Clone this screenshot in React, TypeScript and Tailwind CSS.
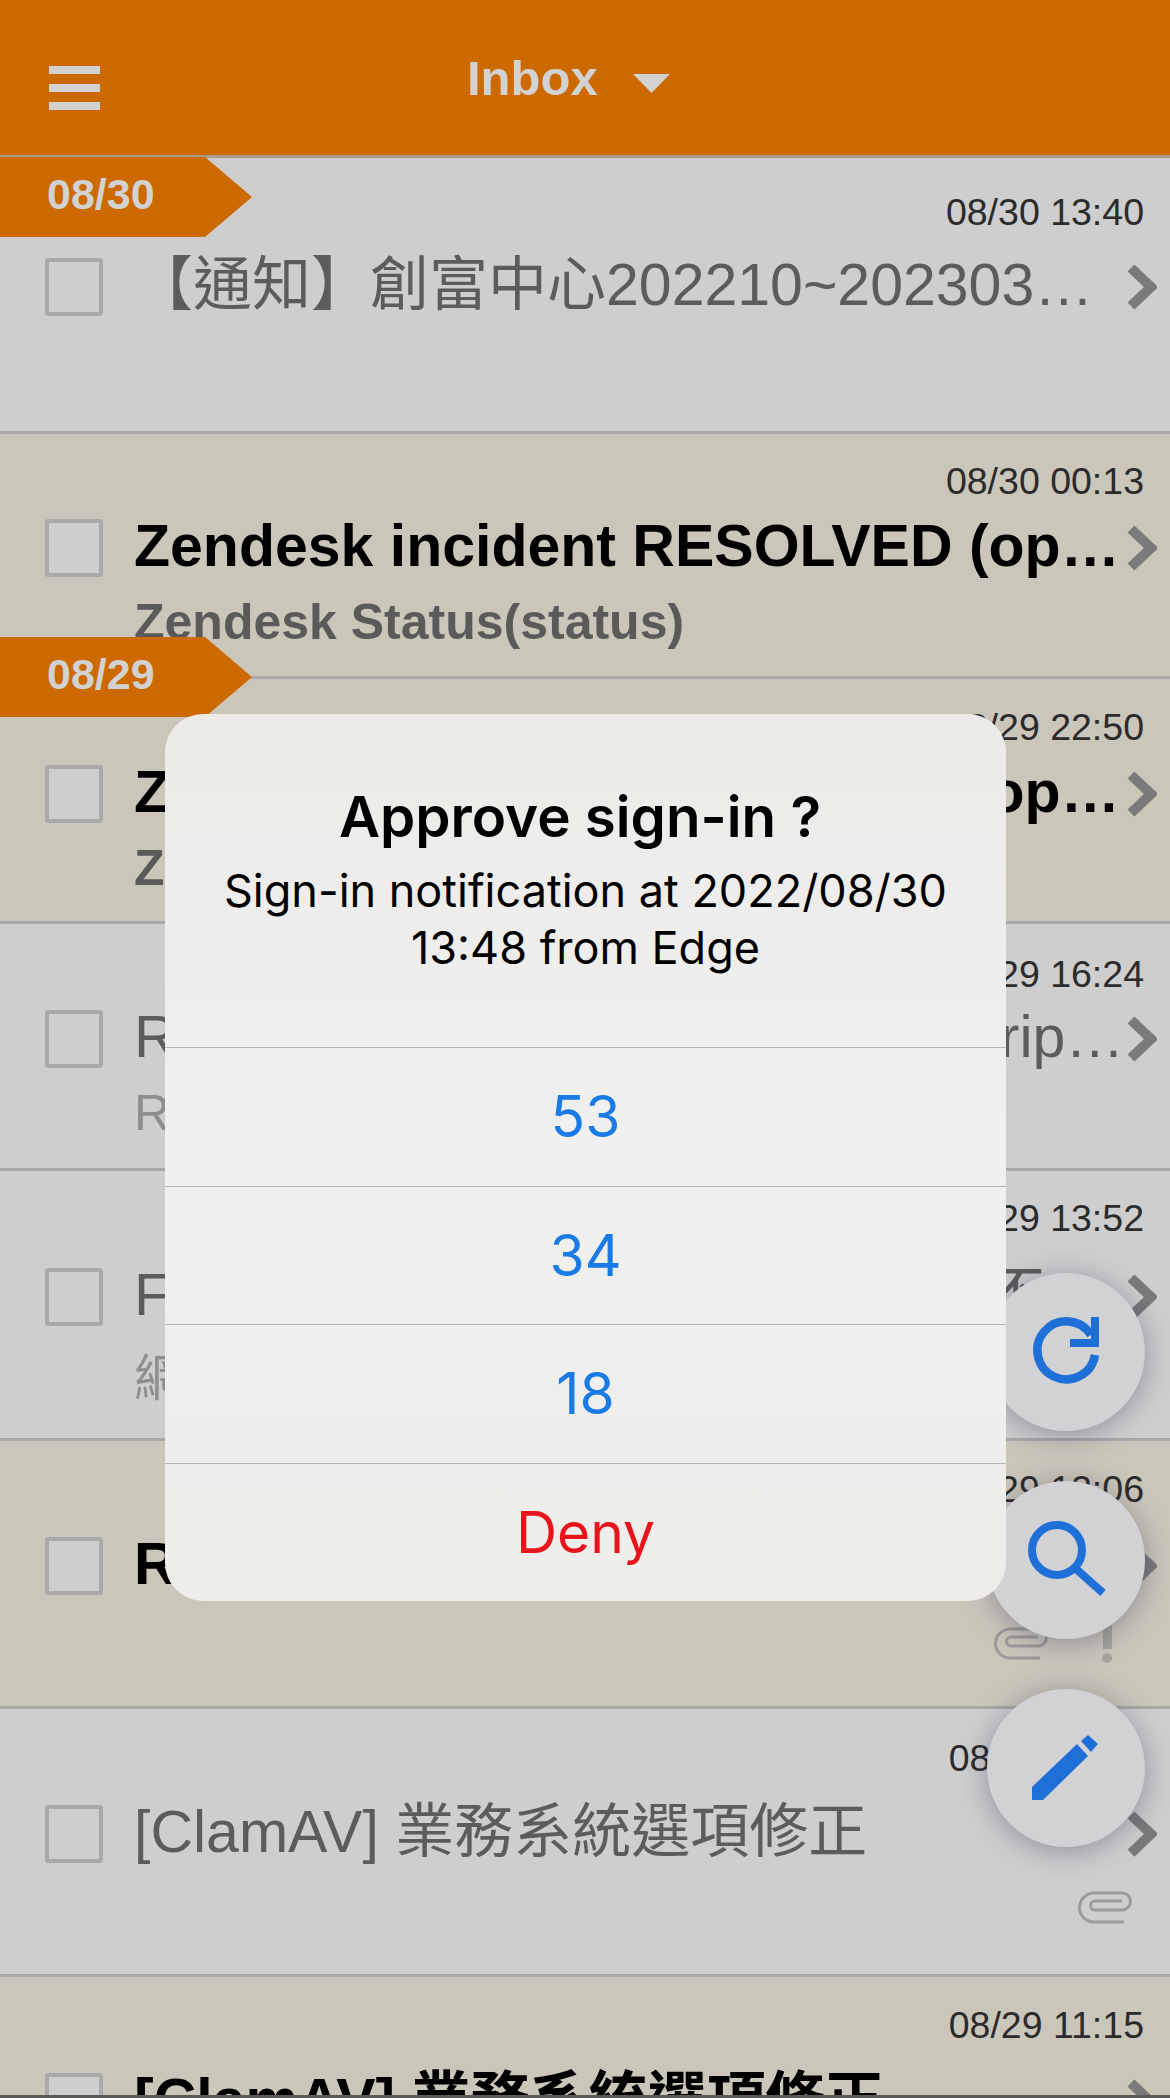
import React from "react";

interface Mail {
  date: string;
  title: string;
  sub?: string;
  unread?: boolean;
  clip?: boolean;
  flag?: boolean;
  box: string;
  dateBox: string;
  titleBox: string;
  subBox?: string;
}

const mails: Mail[] = [
  {
    date: "08/30 13:40",
    title: "【通知】創富中心202210~202303財務報告與相關資料",
    box: "h-[276px]",
    dateBox: "pt-[32px]",
    titleBox: "mt-[24px]",
  },
  {
    date: "08/30 00:13",
    title: "Zendesk incident RESOLVED (operational status update)",
    sub: "Zendesk Status(status)",
    unread: true,
    box: "h-[245px]",
    dateBox: "pt-[25px]",
    titleBox: "mt-[16px]",
    subBox: "mt-[15px]",
  },
  {
    date: "08/29 22:50",
    title: "Zendesk incident RESOLVED (operational status update)",
    sub: "Zendesk Status(status)",
    unread: true,
    box: "h-[245px]",
    dateBox: "pt-[26px]",
    titleBox: "mt-[16px]",
    subBox: "mt-[15px]",
  },
  {
    date: "08/29 16:24",
    title: "Re: Renewal notice for the subscription",
    sub: "Re",
    box: "h-[247px]",
    dateBox: "pt-[28px]",
    titleBox: "mt-[14px]",
    subBox: "mt-[15px]",
  },
  {
    date: "08/29 13:52",
    title: "Fwd: 網路服務異常通知處理方式不明確",
    sub: "網",
    box: "h-[270px]",
    dateBox: "pt-[25px]",
    titleBox: "mt-[28px]",
    subBox: "mt-[23px]",
  },
  {
    date: "08/29 12:06",
    title: "Re",
    unread: true,
    clip: true,
    flag: true,
    box: "h-[268px]",
    dateBox: "pt-[26px]",
    titleBox: "mt-[26px]",
  },
  {
    date: "08/29 11:40",
    title: "[ClamAV] 業務系統選項修正",
    clip: true,
    box: "h-[268px]",
    dateBox: "pt-[27px]",
    titleBox: "mt-[25px]",
  },
  {
    date: "08/29 11:15",
    title: "[ClamAV] 業務系統選項修正",
    unread: true,
    box: "h-[121px]",
    dateBox: "pt-[26px]",
    titleBox: "mt-[26px]",
  },
];

function Chevron() {
  return (
    <svg viewBox="0 0 30 46" className="w-[30px] h-[46px] shrink-0">
      <path d="M4 4 L24 23 L4 42" fill="none" stroke="#7a7a7a" strokeWidth="10" />
    </svg>
  );
}

function Clip() {
  return (
    <svg viewBox="0 0 57 33" className="w-[57px] h-[33px]">
      <path
        d="M46 31 H16 A14.5 14.5 0 0 1 16 2 H44 A8.5 8.5 0 0 1 44 19 H17 A4.5 4.5 0 0 1 17 10 H44"
        fill="none"
        stroke="#9b9b99"
        strokeWidth="3"
      />
    </svg>
  );
}

function Row({ mail }: { mail: Mail }) {
  return (
    <div
      className={`${mail.box} ${mail.unread ? "bg-[#cbc6ba]" : "bg-[#cecece]"} border-b-[3px] border-[#a8a8a8] flex flex-col overflow-hidden`}
    >
      <div className={`${mail.dateBox} pr-[26px] text-right text-[37.5px] leading-[44px] text-[#2b2b2b]`}>
        {mail.date}
      </div>
      <div className={`${mail.titleBox} flex items-center h-[58px] pl-[45px] pr-[13px]`}>
        <div
          className={`w-[58px] h-[58px] shrink-0 rounded-[3px] border-4 border-[#a9a9a9] ${mail.unread ? "bg-[#cecece]" : ""}`}
        />
        <div
          className={`ml-[31px] mb-[4px] flex-1 min-w-0 truncate text-[59px] leading-[72px] ${mail.unread ? "font-bold text-black" : "text-[#5c5c5c]"}`}
        >
          {mail.title}
        </div>
        <Chevron />
      </div>
      {mail.sub && (
        <div
          className={`${mail.subBox} pl-[134px] text-[50px] leading-[60px] ${mail.unread ? "font-bold text-[#5a5a5a]" : "text-[#8e8e8e]"}`}
        >
          {mail.sub}
        </div>
      )}
      {mail.clip && (
        <div
          className={`flex justify-end items-center mt-[28px] ${mail.flag ? "pr-[58px] gap-[51px]" : "pr-[35px]"}`}
        >
          <Clip />
          {mail.flag && (
            <div className="flex flex-col items-center gap-[4px]">
              <div className="w-[9px] h-[26px] bg-[#a5a39d]" />
              <div className="w-[10px] h-[10px] rounded-full bg-[#a5a39d]" />
            </div>
          )}
        </div>
      )}
    </div>
  );
}

function DateTag({ label, pos }: { label: string; pos: string }) {
  return (
    <div
      className={`absolute left-0 ${pos} w-[252px] h-[80px] bg-[#cc6900] [clip-path:polygon(0_0,205px_0,252px_40px,205px_80px,0_80px)] pl-[47px] pb-[6px] flex items-center text-[43px] font-bold text-[#d2d2d2]`}
    >
      {label}
    </div>
  );
}

function Fab({ pos, children }: { pos: string; children: React.ReactNode }) {
  return (
    <div
      className={`absolute left-[987px] ${pos} w-[158px] h-[158px] rounded-full bg-[#d2d2d4] shadow-[0_4px_28px_rgba(50,50,90,0.4)]`}
    >
      <svg viewBox="0 0 158 158" className="w-[158px] h-[158px]">
        {children}
      </svg>
    </div>
  );
}

function DialogButton({ label, danger }: { label: string; danger?: boolean }) {
  return (
    <div
      className={`h-[138.5px] border-t border-[#b4b4b4] flex items-center justify-center text-[57px] ${danger ? "text-[#e8141c]" : "text-[#1a7ae6]"}`}
    >
      {label}
    </div>
  );
}

export default function App() {
  return (
    <div className="relative w-[1170px] h-[2098px] overflow-hidden bg-[#cecece] font-['Liberation_Sans','Noto_Sans_CJK_TC',sans-serif]">
      <header className="h-[158px] bg-[#cc6900] border-b-[3px] border-[#a89c90] flex items-center pl-[49px] pb-[2px]">
        <div className="w-[51px] flex flex-col gap-[10px] mt-[22px]">
          <div className="h-[8px] bg-[#d2d2d2]" />
          <div className="h-[8px] bg-[#d2d2d2]" />
          <div className="h-[8px] bg-[#d2d2d2]" />
        </div>
        <div className="ml-[367px] mt-[5px] text-[49px] font-bold text-[#d2d2d2]">Inbox</div>
        <svg viewBox="0 0 37 19" className="ml-[35px] w-[37px] h-[19px] mt-[14px]">
          <path d="M0 0 H37 L18.5 19 Z" fill="#d2d2d2" />
        </svg>
      </header>

      {mails.map((mail, i) => (
        <Row key={i} mail={mail} />
      ))}

      <DateTag label="08/30" pos="top-[157px]" />
      <DateTag label="08/29" pos="top-[637px]" />

      <Fab pos="top-[1273px]">
        <path d="M104 62 A29 29 0 1 0 108 82" fill="none" stroke="#1f6fd8" strokeWidth="8.5" />
        <path d="M104 44 H112 V74 H83 V66 H104 Z" fill="#1f6fd8" />
      </Fab>
      <Fab pos="top-[1481px]">
        <circle cx="70" cy="69" r="25" fill="none" stroke="#1f6fd8" strokeWidth="8" />
        <path d="M88 87 L116 112" fill="none" stroke="#1f6fd8" strokeWidth="8" />
      </Fab>
      <Fab pos="top-[1689px]">
        <path d="M45 98 V111 H56 L101 67 L90 55 Z" fill="#1f6fd8" />
        <path d="M94 52 L101 46 L111 55 L104 63 Z" fill="#1f6fd8" />
      </Fab>

      <div className="absolute left-[165px] top-[714px] w-[841px] rounded-[38px] overflow-hidden bg-linear-to-b from-[#ecebe8] via-[#f0f0f0] to-[#eeedea] font-['Inter','Noto_Sans_CJK_TC',sans-serif]">
        <div className="h-[333px] pt-[72px] flex flex-col items-center text-black">
          <div className="pr-[11px] text-[56.5px] leading-[62px] font-semibold">Approve sign-in ?</div>
          <div className="mt-[14px] text-[45px] leading-[57px] text-center">
            Sign-in notification at 2022/08/30
            <br />
            13:48 from Edge
          </div>
        </div>
        <DialogButton label="53" />
        <DialogButton label="34" />
        <DialogButton label="18" />
        <DialogButton label="Deny" danger />
      </div>

      <div className="absolute left-0 bottom-0 w-full h-[3px] bg-[#5c5a55]" />
    </div>
  );
}
